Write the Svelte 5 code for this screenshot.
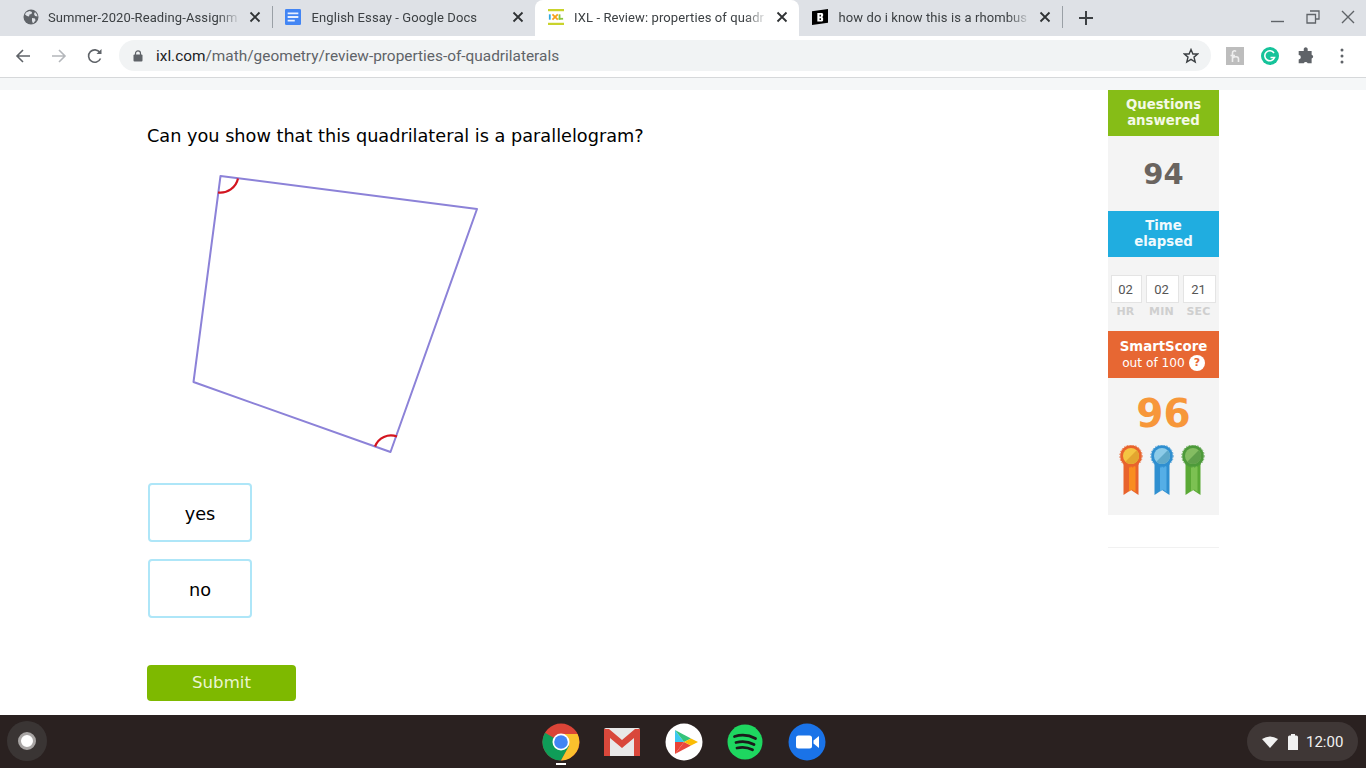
<script>
  const tabs = [
    { id: 'globe', title: 'Summer-2020-Reading-Assignm', active: false },
    { id: 'docs', title: 'English Essay - Google Docs', active: false },
    { id: 'ixl', title: 'IXL - Review: properties of quadr', active: true },
    { id: 'b', title: 'how do i know this is a rhombus', active: false }
  ];
  const timer = [['02', 'HR'], ['02', 'MIN'], ['21', 'SEC']];
  const medals = [
    { ring: '#e8632c', face: '#f4c542', shine: '#e3a52f', rib: '#e8632c', ribIn: '#f98d1f' },
    { ring: '#2f8fd0', face: '#8ccbe8', shine: '#5fa9c9', rib: '#2f8fd0', ribIn: '#55aee6' },
    { ring: '#4d9a3a', face: '#84bd62', shine: '#5f9f4a', rib: '#5aa935', ribIn: '#7cc152' }
  ];
</script>

<div class="screen">
  <header class="tabstrip">
    <div class="tabs">
      {#each tabs as tab, i}
        <div class="tab" class:active={tab.active}>
          <span class="fav" class:globe={tab.id === 'globe'}>
            {#if tab.id === 'globe'}
              <svg viewBox="0 0 16 16" width="16" height="16"><circle cx="8" cy="8" r="7.5" fill="#5f6368"/><path d="M3 3.500 6.500 2 9 3l-.5 2-2 .5-.5 2-2-.5-2-1.500zM9 9l3 .5.5 2-2.500 3-1-2.500zM12 3l2 2.500.5 2-2.500-.5-1-2z" fill="#dee1e6"/></svg>
            {:else if tab.id === 'docs'}
              <svg viewBox="0 0 18 18" width="18" height="18"><rect x="0" y="0" width="18" height="18" rx="1.500" fill="#4285f4"/><path d="M3 4h12v2H3zM3 8h12v2H3zM3 12h8v2H3z" fill="#e8f0fe"/></svg>
            {:else if tab.id === 'ixl'}
              <svg viewBox="0 0 18 18" width="18" height="18"><rect x="0" y="0" width="18" height="2.500" fill="#c9d32c"/><rect x="0" y="15.500" width="18" height="2.500" fill="#c9d32c"/><rect x="1" y="6" width="2" height="6" fill="#2fa9de"/><path d="M5 6l6 6M11 6l-6 6" stroke="#f7a11a" stroke-width="2"/><rect x="12" y="6" width="2" height="6" fill="#8cc63f"/><rect x="12" y="10" width="5" height="2" fill="#8cc63f"/></svg>
            {:else}
              <svg viewBox="0 0 18 18" width="18" height="18"><path d="M0 2.500 18 0v15.500L0 18z" fill="#000"/><path d="M6 4.500h5.500l1 1v2.500l-1 1 1 1v3l-1 1H6zM8.500 6.500v2h1.500v-2zM8.500 10.500v2h1.500v-2z" fill="#fff" fill-rule="evenodd"/></svg>
            {/if}
          </span>
          <span class="title">{tab.title}</span>
          <svg class="close" viewBox="0 0 12 12" width="12" height="12"><path d="M1.500 1.500l9 9M10.500 1.500l-9 9" stroke="#2f3234" stroke-width="1.800"/></svg>
        </div>
        {#if i === 0 || i === 3}<span class="sep"></span>{/if}
      {/each}
      <svg class="plus" viewBox="0 0 14 14" width="14" height="14"><path d="M7 0v14M0 7h14" stroke="#3c4043" stroke-width="2"/></svg>
    </div>
    <div class="winctl">
      <svg viewBox="0 0 14 14" width="14" height="14"><path d="M0 11.500h13" stroke="#5f6368" stroke-width="1.400"/></svg>
      <svg viewBox="0 0 14 14" width="14" height="14"><path d="M4 1h9v8H10M1 4.500h8.500V13H1z" fill="none" stroke="#5f6368" stroke-width="1.300"/></svg>
      <svg viewBox="0 0 14 14" width="14" height="14"><path d="M1 1l12 12M13 1 1 13" stroke="#5f6368" stroke-width="1.400"/></svg>
    </div>
  </header>

  <nav class="toolbar">
    <svg class="nav" viewBox="0 0 16 16" width="16" height="16"><path d="M15 8H2M8 2 2 8l6 6" fill="none" stroke="#5f6368" stroke-width="1.600"/></svg>
    <svg class="nav" viewBox="0 0 16 16" width="16" height="16"><path d="M1 8h13M8 2l6 6-6 6" fill="none" stroke="#b4b7bb" stroke-width="1.600"/></svg>
    <svg class="nav" viewBox="0 0 16 16" width="16" height="16"><path d="M13.500 10.500a6.200 6.200 0 1 1-.6-6" fill="none" stroke="#5f6368" stroke-width="1.600"/><path d="M14.500 1v5h-5z" fill="#5f6368"/></svg>
    <div class="omnibox">
      <svg class="lock" viewBox="0 0 10 12" width="10" height="12"><path d="M2.500 5V3.400a2.500 2.500 0 0 1 5 0V5" fill="none" stroke="#5f6368" stroke-width="1.200"/><rect x="0.500" y="4.500" width="9" height="7" rx="1" fill="#5f6368"/></svg>
      <span class="url"><b>ixl.com</b>/math/geometry/review-properties-of-quadrilaterals</span>
      <svg class="star" viewBox="0 0 16 16" width="16" height="16"><path d="M8 1.500 9.900 6h4.800l-3.700 3.100 1.200 4.900L8 11.300 3.800 14 5 9.100 1.300 6h4.800z" fill="none" stroke="#3c4043" stroke-width="1.400"/></svg>
    </div>
    <div class="exts">
      <span class="ext-r">
        <svg viewBox="0 0 18 18" width="18" height="18"><rect width="18" height="18" fill="#bdbdbd"/><path d="M6.500 15V6a2 2 0 0 1 3.500-1.500M4.500 8.500H9M6.500 11c2-1.500 6-2 6 1v3" fill="none" stroke="#eee" stroke-width="1.600"/></svg>
      </span>
      <svg viewBox="0 0 18 18" width="18" height="18"><circle cx="9" cy="9" r="9" fill="#15c39a"/><path d="M13 6a5 5 0 1 0 .5 4.500H9.500" fill="none" stroke="#fff" stroke-width="1.600"/></svg>
      <svg class="puzzle" viewBox="0 0 16 16" width="18" height="18"><path d="M6 1.500a1.800 1.800 0 0 1 3.500 0V3.500H13v3.300a1.800 1.800 0 0 1 0 3.500V14.500H9.500a1.900 1.900 0 0 0-3.500 0H1.500V11a1.900 1.900 0 0 0 0-3.800V3.500H6z" fill="#5f6368"/></svg>
      <svg class="dots" viewBox="0 0 4 16" width="4" height="16"><circle cx="2" cy="2" r="1.500" fill="#5f6368"/><circle cx="2" cy="8" r="1.500" fill="#5f6368"/><circle cx="2" cy="14" r="1.500" fill="#5f6368"/></svg>
    </div>
  </nav>

  <main class="page">
    <div class="topband"></div>
    <div class="content">
      <section class="practice">
        <h1>Can you show that this quadrilateral is a parallelogram?</h1>
        <svg class="figure" viewBox="147 165 340 300" width="340" height="300">
          <polygon points="220.500,176 477,209 390.500,452 193.500,382" fill="#fff" stroke="#8c82d8" stroke-width="2" stroke-linejoin="round"/>
          <path d="M238 178.500A18 18 0 0 1 218 192.500" fill="none" stroke="#d3141f" stroke-width="2.200"/>
          <path d="M375 446.500A17 17 0 0 1 397 436.500" fill="none" stroke="#d3141f" stroke-width="2.200"/>
        </svg>
        <div class="choices">
          <button class="choice">yes</button>
          <button class="choice">no</button>
        </div>
        <button class="submit">Submit</button>
      </section>

      <aside class="side">
        <div class="head green">Questions<br />answered</div>
        <div class="panel count">94</div>
        <div class="head blue">Time<br />elapsed</div>
        <div class="panel timer">
          {#each timer as t}
            <div class="unit"><span class="box">{t[0]}</span><span class="lab">{t[1]}</span></div>
          {/each}
        </div>
        <div class="head orange"><b>SmartScore</b><span class="sub">out of 100 <i class="q">?</i></span></div>
        <div class="panel score">
          <div class="num">96</div>
          <div class="medals">
            {#each medals as m}
              <svg viewBox="0 0 24 50" width="24" height="50">
                <path d="M4.500 14h15v36l-7.500-5-7.500 5z" fill={m.rib}/>
                <path d="M10 14h6.500v33l-3.500-2.500-3 2z" fill={m.ribIn}/>
                <circle cx="12" cy="11" r="10.800" fill={m.ring}/>
                <circle cx="12" cy="11" r="11.200" fill="none" stroke={m.ring} stroke-width="0.800" stroke-dasharray="1.500 1.500"/>
                <circle cx="12" cy="11" r="8" fill={m.face}/>
                <path d="M17.700 5.300a8 8 0 0 1-11.400 11.400z" fill={m.shine}/>
              </svg>
            {/each}
          </div>
        </div>
        <div class="rule"></div>
      </aside>
    </div>
  </main>

  <footer class="shelf">
    <span class="launcher"><i></i></span>
    <div class="apps">
      <span class="app running">
        <svg viewBox="0 0 38 38" width="38" height="38">
          <circle cx="19" cy="19" r="18.500" fill="#db4437"/>
          <path d="M19 19 3 9.700A18.500 18.500 0 0 0 19 37.500l9-16z" fill="#0f9d58"/>
          <path d="M19 11h16.500A18.500 18.500 0 0 1 19 37.500L27 23z" fill="#fbc02d"/>
          <circle cx="19" cy="19" r="8.500" fill="#fff"/>
          <circle cx="19" cy="19" r="6.800" fill="#4285f4"/>
        </svg>
      </span>
      <span class="app">
        <svg viewBox="0 0 38 38" width="38" height="38">
          <rect x="1" y="5" width="36" height="28" rx="2" fill="#e8e8e8"/>
          <path d="M1 33V7l18 14L37 7v26h-6V15L19 25 7 15v18z" fill="#d9483b"/>
          <path d="M1 6h5l13 11L32 6h5v3L19 23 1 9z" fill="#d9483b"/>
        </svg>
      </span>
      <span class="app">
        <svg viewBox="0 0 38 38" width="38" height="38">
          <circle cx="19" cy="19" r="18.500" fill="#fff"/>
          <path d="M10 7v12h9z" fill="#3bc8f0"/>
          <path d="M10 31V19h9z" fill="#ea4335"/>
          <path d="M10 7l16 8.500L19 19z" fill="#34c37a"/>
          <path d="M10 31l16-8.500L19 19z" fill="#e8473f"/>
          <path d="M26 15.500 33 19l-7 3.500L19 19z" fill="#fbbc04"/>
        </svg>
      </span>
      <span class="app">
        <svg viewBox="0 0 38 38" width="38" height="38">
          <circle cx="19" cy="19" r="17.500" fill="#1ed760"/>
          <path d="M8.500 13.500C15 11.500 23 12 29.500 15.500M10 19.500c5.500-1.500 12.500-1 18 2M11 25c5-1.200 10.500-.8 15.500 1.800" fill="none" stroke="#1b1b1b" stroke-width="2.800" stroke-linecap="round"/>
        </svg>
      </span>
      <span class="app">
        <svg viewBox="0 0 38 38" width="38" height="38">
          <circle cx="19" cy="19" r="18.500" fill="#1a73e8"/>
          <rect x="8" y="12.500" width="16" height="13" rx="2.500" fill="#fff"/>
          <path d="M25.500 17.500 31 13v12l-5.500-4.500z" fill="#fff"/>
        </svg>
      </span>
    </div>
    <div class="status">
      <svg viewBox="0 0 16 12" width="16" height="12"><path d="M0 3Q8-2 16 3L8 12z" fill="#f1f1f1"/></svg>
      <svg class="batt" viewBox="0 0 10 16" width="10" height="16"><path d="M3 0h4v1.500h1.500A1.500 1.500 0 0 1 10 3v13H0V3a1.500 1.500 0 0 1 1.500-1.500H3z" fill="#f1f1f1"/></svg>
      <span class="clock">12:00</span>
    </div>
  </footer>
</div>

<style>
  :global(body) { margin: 0; background: #fff; overflow: hidden; }
  .screen { width: 1366px; height: 768px; display: flex; flex-direction: column; overflow: hidden; font-family: Roboto, sans-serif; }

  .tabstrip { height: 36px; background: #dee1e6; display: flex; justify-content: space-between; flex: none; }
  .tabs { display: flex; align-items: center; padding-left: 8px; height: 36px; }
  .tab { width: 263.500px; height: 36px; box-sizing: border-box; padding: 0 11px 2px 15px; display: flex; align-items: center; font-size: 13px; color: #3c4043; position: relative; flex: none; }
  .tab.active { background: #fff; border-radius: 8px 8px 0 0; }
  .fav { width: 16px; height: 18px; display: flex; align-items: center; justify-content: center; flex: none; margin-right: 9px; position: relative; left: -2px; }
  .fav.globe { left: 0; }
  .title { flex: 1; min-width: 0; white-space: nowrap; overflow: hidden; -webkit-mask-image: linear-gradient(90deg, #000 88%, transparent 100%); mask-image: linear-gradient(90deg, #000 88%, transparent 100%); letter-spacing: 0.1px; }
  .tab.active .title { margin-left: -1px; }
  .close { flex: none; margin-left: 8px; }
  .sep { width: 1px; height: 22px; background: #9aa0a6; flex: none; margin: 0 -1px 0 0; position: relative; top: -1px; }
  .plus { margin-left: 17px; }
  .winctl { display: flex; gap: 21px; padding: 10px 11px 0 0; align-items: flex-start; }

  .toolbar { height: 39px; padding: 0 0 2px 15px; background: #fff; display: flex; align-items: center; flex: none; border-bottom: 1px solid #d6d8da; box-sizing: content-box; }
  .nav { margin-right: 20px; flex: none; }
  .omnibox { width: 1092px; margin-left: -4px; height: 31px; background: #f1f3f4; border-radius: 16px; display: flex; align-items: center; box-sizing: border-box; padding: 0 12px 0 14px; flex: none; }
  .lock { flex: none; margin-right: 13px; }
  .url { flex: 1; font-size: 15.400px; color: #5f6368; white-space: nowrap; }
  .url b { font-weight: 400; color: #202124; }
  .exts { display: flex; align-items: center; margin-left: 15px; gap: 17px; }
  .ext-r { display: flex; }
  .puzzle { margin-left: 1px; }
  .dots { margin-left: 8px; }

  .page { flex: 1; min-height: 0; background: #fff; display: flex; flex-direction: column; font-family: "DejaVu Sans", Verdana, sans-serif; }
  .topband { height: 12px; background: #f5f7f8; flex: none; }
  .content { display: flex; justify-content: space-between; padding: 0 147px; flex: 1; min-height: 0; }
  .practice { display: flex; flex-direction: column; align-items: flex-start; }
  h1 { font-weight: 400; font-size: 17.700px; line-height: 24px; color: #000; margin: 34px 0 17px; white-space: nowrap; }
  .figure { display: block; }
  .choices { display: flex; flex-direction: column; gap: 17px; margin: 18px 0 47px 1px; }
  .choice { width: 104px; height: 59px; box-sizing: border-box; border: 2px solid #aee6f8; border-radius: 4px; background: #fff; font: 400 17.700px "DejaVu Sans", Verdana, sans-serif; color: #000; padding: 2px 0 0; }
  .submit { width: 149px; height: 36px; border: 0; border-radius: 4px; background: #7eb900; color: #eaf5d0; font: 400 16.600px "DejaVu Sans", Verdana, sans-serif; padding: 0 0 1px; }

  .side { width: 111px; flex: none; text-align: center; }
  .head { height: 46px; box-sizing: border-box; padding-top: 7px; color: #f4f9e6; font-weight: 700; font-size: 13.300px; line-height: 16px; }
  .green { background: #86bd17; }
  .blue { background: #20ade0; color: #f1fafd; }
  .orange { background: #e76733; height: 47px; color: #fff; display: flex; flex-direction: column; align-items: center; padding-top: 8px; }
  .sub { font-size: 12.200px; font-weight: 400; display: flex; align-items: center; gap: 4px; }
  .q { width: 16px; height: 16px; background: #fff; color: #e76733; border-radius: 50%; font: 700 11px/16px "DejaVu Sans", sans-serif; }
  .panel { background: #f4f4f4; }
  .count { height: 75px; display: flex; align-items: center; justify-content: center; font-weight: 700; font-size: 29px; color: #6a645f; }
  .timer { height: 74px; display: flex; gap: 4px; padding: 18px 3px 0; box-sizing: border-box; }
  .unit { display: flex; flex-direction: column; align-items: center; width: 33px; }
  .unit:first-child { width: 31px; }
  .box { width: 100%; height: 28px; box-sizing: border-box; border: 1px solid #e4e4e4; background: #fff; padding-right: 2px; font: 400 13px/28px Roboto, sans-serif; color: #555; }
  .lab { font-size: 11px; font-weight: 700; color: #cfcfcf; line-height: 14px; margin: 2px 2px 0 0; letter-spacing: 0.200px; }
  .score { height: 137px; }
  .num { font-weight: 700; font-size: 39px; line-height: 44px; color: #f7973a; padding-top: 14px; }
  .medals { display: flex; justify-content: center; gap: 7px; margin: 9px 0 0 -3px; }
  .rule { height: 1px; background: #f1f1f1; margin-top: 32px; }

  .shelf { height: 53px; background: #2a2120; flex: none; display: flex; align-items: center; position: relative; }
  .launcher { width: 40px; height: 40px; border-radius: 50%; background: #3a3534; margin-left: 7px; display: flex; align-items: center; justify-content: center; flex: none; position: relative; top: -1px; }
  .launcher i { width: 18px; height: 18px; border-radius: 50%; background: #fff; border: 3px solid #a8a5a4; box-sizing: border-box; }
  .apps { display: flex; gap: 23.400px; margin-left: 495px; align-items: center; }
  .app { display: block; width: 38px; height: 38px; position: relative; }
  .running::after { content: ""; position: absolute; left: 14px; bottom: -4px; width: 10px; height: 2px; background: #fff; }
  .status { position: absolute; left: 1247px; top: 7px; width: 111px; height: 39px; border-radius: 20px; background: #3f3736; display: flex; align-items: center; box-sizing: border-box; padding-left: 15px; color: #f1f1f1; }
  .batt { margin-left: 10px; }
  .clock { font-size: 15px; margin-left: 8px; }
</style>
